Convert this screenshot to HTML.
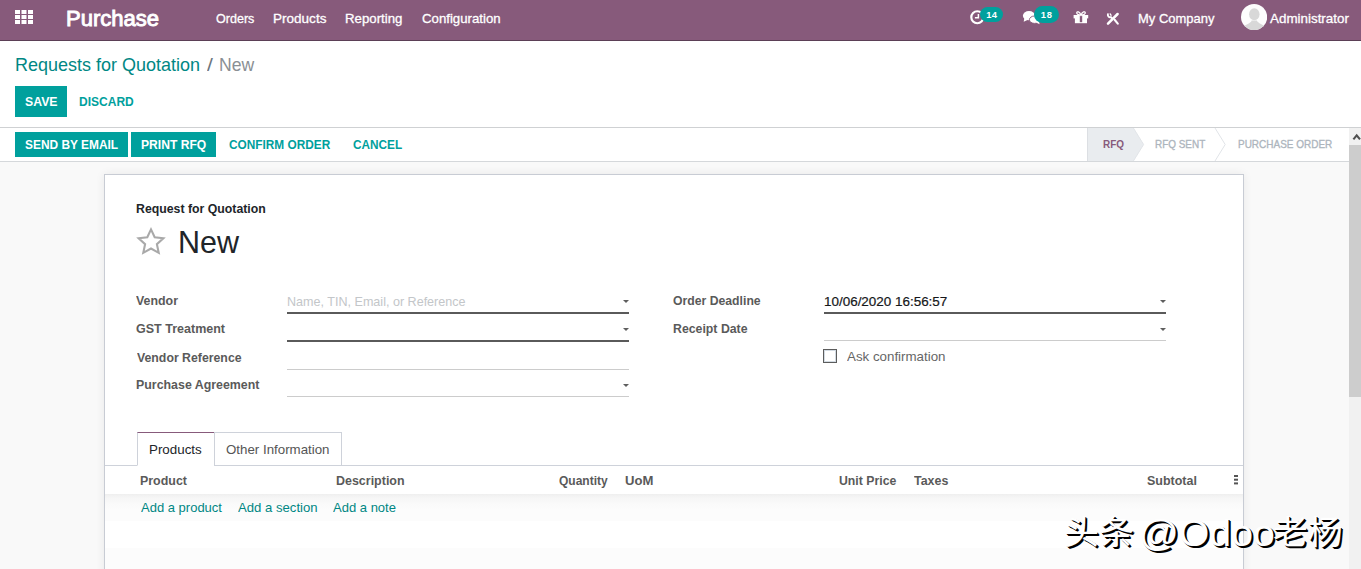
<!DOCTYPE html>
<html><head><meta charset="utf-8"><title>Odoo - New</title>
<style>
*{box-sizing:border-box;margin:0;padding:0}
html,body{width:1361px;height:569px;overflow:hidden;background:#f9f9f9;font-family:"Liberation Sans","Noto Sans CJK SC",sans-serif;font-size:13px;color:#4c4c4c}
.abs{position:absolute;white-space:nowrap}
.tx{position:absolute;white-space:nowrap;line-height:normal;transform-origin:0 0}
#nav{position:absolute;left:0;top:0;width:1361px;height:41px;background:#875a7b;border-bottom:1px solid #5b3f56}
#cp{position:absolute;left:0;top:41px;width:1361px;height:87px;background:#fff;border-bottom:1px solid #cfd1d3}
#sb{position:absolute;left:0;top:128px;width:1349px;height:34px;background:#fff;border-bottom:1px solid #d5d8db}
.btn{position:absolute;background:#00a09d}
#sheet{position:absolute;left:104px;top:174px;width:1140px;height:420px;background:#fff;border:1px solid #c8ccd4;box-shadow:0 0 9px rgba(0,0,0,.07)}
.ln{position:absolute;height:0}
.wm{color:#fff;text-shadow:1px 1px 0 #000,2px 2px 0 #000;line-height:normal}
.caret{position:absolute;width:0;height:0;border-left:3px solid transparent;border-right:3px solid transparent;border-top:3px solid #5e5e5e}
</style></head><body>
<div id="nav">
 <svg class="abs" style="left:15px;top:10px" width="18" height="14" viewBox="0 0 18 14"><g fill="#fff"><rect x="0" y="0" width="5" height="4"/><rect x="6.5" y="0" width="5" height="4"/><rect x="13" y="0" width="5" height="4"/><rect x="0" y="5" width="5" height="4"/><rect x="6.5" y="5" width="5" height="4"/><rect x="13" y="5" width="5" height="4"/><rect x="0" y="10" width="5" height="4"/><rect x="6.5" y="10" width="5" height="4"/><rect x="13" y="10" width="5" height="4"/></g></svg>
 <!-- clock -->
 <svg class="abs" style="left:968px;top:9px" width="18" height="18" viewBox="0 0 18 18"><circle cx="9.3" cy="8.25" r="6.0" fill="none" stroke="#fff" stroke-width="2.2"/><path d="M10.4 4.9 V8.7 H6.9" fill="none" stroke="#fff" stroke-width="1.5"/></svg>
 <div class="abs" style="left:980.3px;top:6.8px;width:22.9px;height:15.5px;border-radius:8px;background:#00a09d"></div>
 <!-- chat -->
 <svg class="abs" style="left:1022px;top:10px" width="19" height="15" viewBox="0 0 19 15"><ellipse cx="7" cy="5.7" rx="6.1" ry="4.6" fill="#fff"/><path d="M2.4 8 L1.7 11.8 L6 9.8 Z" fill="#fff"/><ellipse cx="12.6" cy="9.7" rx="5.2" ry="3.7" fill="#fff" stroke="#875a7b" stroke-width="0.9"/><path d="M14 12.4 L17.6 14.2 L16.8 10.4 Z" fill="#fff"/></svg>
 <div class="abs" style="left:1034px;top:6px;width:25.4px;height:17px;border-radius:9px;background:#00a09d"></div>
 <!-- gift -->
 <svg class="abs" style="left:1072px;top:9px" width="18" height="16" viewBox="0 0 18 16"><g fill="#fff"><rect x="1.6" y="6" width="14.6" height="3.4"/><rect x="2.9" y="9" width="12.1" height="5.2"/></g><rect x="7.8" y="6.4" width="2.4" height="6.8" fill="#875a7b"/><path d="M9 6 C6.4 6 4.4 5.2 4.7 3.7 C5.1 2.2 7.6 2.4 9 6 C10.4 2.4 12.9 2.2 13.3 3.7 C13.6 5.2 11.6 6 9 6 Z" fill="none" stroke="#fff" stroke-width="1.2"/></svg>
 <!-- tools -->
 <svg class="abs" style="left:1105px;top:11px" width="16" height="15" viewBox="0 0 16 15"><path d="M12.6 3 L3 12.6" stroke="#fff" stroke-width="2.5" stroke-linecap="round"/><path d="M9.6 8.8 L12.8 12.6" stroke="#fff" stroke-width="2.1" stroke-linecap="round"/><path d="M2.9 3.3 C2.5 5.3 4 6.5 5.8 6.1 L7.4 7.6" fill="none" stroke="#fff" stroke-width="1.9" stroke-linecap="round"/><path d="M5.2 2.9 L6.1 4.3" stroke="#fff" stroke-width="1.3" stroke-linecap="round"/></svg>
 <!-- avatar -->
 <svg class="abs" style="left:1240.8px;top:3.9px" width="26.2" height="26.2" viewBox="0 0 26 26"><defs><clipPath id="av"><circle cx="13" cy="13" r="13"/></clipPath></defs><g clip-path="url(#av)"><rect width="26" height="26" fill="#fdfdfd"/><ellipse cx="13.2" cy="10.2" rx="5.2" ry="5.9" fill="#d8d8d8"/><path d="M1.5 25 C3 19.6 9.6 20 10.6 16.4 H15.8 C16.8 20 23.4 19.6 24.9 25 V27 H1.5 Z" fill="#d8d8d8"/></g></svg>
</div>
<div id="cp">
 <div class="btn" style="left:15px;top:45px;width:52px;height:31px"></div>
</div>
<div id="sb">
 <div class="btn" style="left:15px;top:4px;width:113px;height:25px"></div>
 <div class="btn" style="left:131px;top:4px;width:85px;height:25px"></div>
 <svg class="abs" style="left:1080px;top:0" width="269" height="33" viewBox="0 0 269 33">
  <path d="M7.5 0 H53.4 L63.6 16.5 L53.4 33 H7.5 Z" fill="#e9ecef"/>
  <path d="M7.5 0 V33" stroke="#dcdfe3" stroke-width="1" fill="none"/>
  <path d="M53.4 0 L63.6 16.5 L53.4 33" stroke="#e1e4e8" stroke-width="1" fill="none"/>
  <path d="M135 0 L145.2 16.5 L135 33" stroke="#e1e4e8" stroke-width="1" fill="none"/>
 </svg>
</div>
<div id="sheet">
 <svg class="abs" style="left:30px;top:50.6px" width="32" height="31" viewBox="0 0 32 31"><path d="M16 3.4 L19.7 11.3 L28.4 12.3 L21.9 18.2 L23.7 26.8 L16 22.5 L8.3 26.8 L10.1 18.2 L3.6 12.3 L12.3 11.3 Z" fill="none" stroke="#a9a9a9" stroke-width="2.1" stroke-linejoin="miter"/></svg>
 <div class="ln" style="left:182px;top:137px;width:342px;border-top:2px solid #5a5a5a"></div>
 <div class="ln" style="left:182px;top:165px;width:342px;border-top:2px solid #5a5a5a"></div>
 <div class="ln" style="left:182px;top:194px;width:342px;border-top:1px solid #ccc"></div>
 <div class="ln" style="left:182px;top:221px;width:342px;border-top:1px solid #ccc"></div>
 <div class="caret" style="left:518px;top:125px"></div>
 <div class="caret" style="left:518px;top:153px"></div>
 <div class="caret" style="left:518px;top:209px"></div>
 <div class="ln" style="left:719px;top:137px;width:342px;border-top:2px solid #5a5a5a"></div>
 <div class="ln" style="left:719px;top:165px;width:342px;border-top:1px solid #ccc"></div>
 <div class="caret" style="left:1055px;top:125px"></div>
 <div class="caret" style="left:1055px;top:153px"></div>
 <div class="abs" style="left:718px;top:174px;width:14px;height:14px;border:1px solid #5c5c5c;background:#fff;box-shadow:inset 0 0 0 1px #d3dbe3"></div>

 <div class="abs" style="left:0;top:290px;width:1138px;height:1px;background:#ced2da"></div>
 <div class="abs" style="left:32px;top:257px;width:78px;height:34px;background:#fff;border:1px solid #ced2da;border-top:1px solid #875a7b;border-bottom:1px solid #fff"></div>
 <div class="abs" style="left:109px;top:257px;width:128px;height:34px;background:#fff;border:1px solid #ced2da"></div>
 <div class="abs" style="left:1129.2px;top:299.8px;width:3.8px;height:2.5px;background:#555;box-shadow:0 3.7px 0 #555,0 7.4px 0 #555"></div>
 <div class="abs" style="left:0;top:319px;width:1138px;height:27px;background:linear-gradient(#efefef,#f6f6f6 4px,#fafafa 10px,#fcfcfc 16px,#fcfcfc)"></div>
 <div class="abs" style="left:0;top:373px;width:1138px;height:27px;background:#fcfcfc"></div>
</div>
<div class="abs" style="left:1349px;top:128px;width:12px;height:441px;background:#f1f1f1"></div>
<div class="abs" style="left:1349px;top:145px;width:12px;height:252px;background:#cdcdcd"></div>
<svg class="abs" style="left:1349px;top:128px" width="12" height="17" viewBox="0 0 12 17"><path d="M4.4 11.4 L7.7 7.3 L11 11.4" fill="none" stroke="#505050" stroke-width="2.1" stroke-linejoin="miter"/></svg>
<div id="txl">
<div class="abs" id="n14" style="left:986.3px;top:9.2px;font-size:9.4px;font-weight:bold;color:#fff;line-height:12px;letter-spacing:0.3px">14</div>
<div class="abs" id="n18" style="left:1040.7px;top:9.2px;font-size:9.4px;font-weight:bold;color:#fff;line-height:12px;letter-spacing:0.8px">18</div>
<div class="tx" id="brand" style="left:65.59px;top:5.81px;font-size:22.4px;font-weight:normal;color:#fff;letter-spacing:0.000px;transform:scaleX(0.9834);-webkit-text-stroke-width:0.95px">Purchase</div>
<div class="tx" id="m1" style="left:215.64px;top:11.10px;font-size:13.6px;font-weight:normal;color:#fff;letter-spacing:0.000px;transform:scaleX(0.9233);-webkit-text-stroke-width:0.3px">Orders</div>
<div class="tx" id="m2" style="left:272.68px;top:11.10px;font-size:13.6px;font-weight:normal;color:#fff;letter-spacing:0.000px;transform:scaleX(0.9956);-webkit-text-stroke-width:0.3px">Products</div>
<div class="tx" id="m3" style="left:344.54px;top:11.10px;font-size:13.6px;font-weight:normal;color:#fff;letter-spacing:0.000px;transform:scaleX(0.9746);-webkit-text-stroke-width:0.3px">Reporting</div>
<div class="tx" id="m4" style="left:421.62px;top:11.10px;font-size:13.6px;font-weight:normal;color:#fff;letter-spacing:0.000px;transform:scaleX(0.9726);-webkit-text-stroke-width:0.3px">Configuration</div>
<div class="tx" id="co" style="left:1137.57px;top:11.10px;font-size:13.6px;font-weight:normal;color:#fff;letter-spacing:0.000px;transform:scaleX(0.9554);-webkit-text-stroke-width:0.3px">My Company</div>
<div class="tx" id="ad" style="left:1269.63px;top:11.10px;font-size:13.6px;font-weight:normal;color:#fff;letter-spacing:0.000px;transform:scaleX(0.9855);-webkit-text-stroke-width:0.3px">Administrator</div>
<div class="tx" id="bc1" style="left:14.63px;top:54.00px;font-size:18.4px;font-weight:normal;color:#008784;letter-spacing:0.000px;transform:scaleX(0.9786);">Requests for Quotation</div>
<div class="tx" id="bc2" style="left:206.58px;top:54.21px;font-size:18.4px;font-weight:normal;color:#6c757d;letter-spacing:0.000px;transform:scaleX(1.1500);">/</div>
<div class="tx" id="bc3" style="left:218.54px;top:54.21px;font-size:18.4px;font-weight:normal;color:#8a8f94;letter-spacing:0.000px;transform:scaleX(0.9564);">New</div>
<div class="tx" id="save" style="left:24.59px;top:94.21px;font-size:13.3px;font-weight:bold;color:#fff;letter-spacing:0.000px;transform:scaleX(0.9249);">SAVE</div>
<div class="tx" id="discard" style="left:79.03px;top:94.21px;font-size:13.3px;font-weight:bold;color:#00a09d;letter-spacing:0.000px;transform:scaleX(0.9036);">DISCARD</div>
<div class="tx" id="b1" style="left:24.72px;top:137.41px;font-size:13.3px;font-weight:bold;color:#fff;letter-spacing:0.000px;transform:scaleX(0.8963);">SEND BY EMAIL</div>
<div class="tx" id="b2" style="left:140.57px;top:137.41px;font-size:13.3px;font-weight:bold;color:#fff;letter-spacing:0.000px;transform:scaleX(0.9110);">PRINT RFQ</div>
<div class="tx" id="b3" style="left:228.59px;top:137.41px;font-size:13.3px;font-weight:bold;color:#00a09d;letter-spacing:0.000px;transform:scaleX(0.8902);">CONFIRM ORDER</div>
<div class="tx" id="b4" style="left:353.14px;top:137.41px;font-size:13.3px;font-weight:bold;color:#00a09d;letter-spacing:0.000px;transform:scaleX(0.8878);">CANCEL</div>
<div class="tx" id="s1" style="left:1102.70px;top:137.20px;font-size:11.6px;font-weight:bold;color:#875a7b;letter-spacing:0.000px;transform:scaleX(0.8579);">RFQ</div>
<div class="tx" id="s2" style="left:1154.71px;top:137.20px;font-size:11.6px;font-weight:normal;color:#adb5bd;letter-spacing:0.000px;transform:scaleX(0.8573);-webkit-text-stroke-width:0.35px">RFQ SENT</div>
<div class="tx" id="s3" style="left:1237.73px;top:137.20px;font-size:11.6px;font-weight:normal;color:#adb5bd;letter-spacing:0.000px;transform:scaleX(0.8608);-webkit-text-stroke-width:0.35px">PURCHASE ORDER</div>
<div class="tx" id="rfq" style="left:135.57px;top:201.01px;font-size:13.4px;font-weight:bold;color:#212529;letter-spacing:0.000px;transform:scaleX(0.9183);">Request for Quotation</div>
<div class="tx" id="new" style="left:177.68px;top:223.81px;font-size:32px;font-weight:normal;color:#212529;letter-spacing:0.000px;transform:scaleX(0.9527);">New</div>
<div class="tx" id="l1" style="left:136.08px;top:293.30px;font-size:13.4px;font-weight:bold;color:#5a5a5a;letter-spacing:0.000px;transform:scaleX(0.9248);">Vendor</div>
<div class="tx" id="l2" style="left:135.96px;top:321.01px;font-size:13.4px;font-weight:bold;color:#5a5a5a;letter-spacing:0.000px;transform:scaleX(0.9348);">GST Treatment</div>
<div class="tx" id="l3" style="left:136.57px;top:349.71px;font-size:13.4px;font-weight:bold;color:#5a5a5a;letter-spacing:0.000px;transform:scaleX(0.9183);">Vendor Reference</div>
<div class="tx" id="l4" style="left:135.54px;top:376.60px;font-size:13.4px;font-weight:bold;color:#5a5a5a;letter-spacing:0.000px;transform:scaleX(0.9250);">Purchase Agreement</div>
<div class="tx" id="ph" style="left:286.58px;top:294.41px;font-size:13.4px;font-weight:normal;color:#c3c6c9;letter-spacing:0.000px;transform:scaleX(0.9384);">Name, TIN, Email, or Reference</div>
<div class="tx" id="r1" style="left:673.13px;top:293.30px;font-size:13.4px;font-weight:bold;color:#5a5a5a;letter-spacing:0.000px;transform:scaleX(0.9131);">Order Deadline</div>
<div class="tx" id="r2" style="left:672.54px;top:321.01px;font-size:13.4px;font-weight:bold;color:#5a5a5a;letter-spacing:0.000px;transform:scaleX(0.9192);">Receipt Date</div>
<div class="tx" id="dt" style="left:823.53px;top:294.41px;font-size:13.4px;font-weight:normal;color:#15171a;letter-spacing:0.000px;transform:scaleX(1.0036);-webkit-text-stroke-width:0.2px">10/06/2020 16:56:57</div>
<div class="tx" id="ask" style="left:846.74px;top:349.01px;font-size:13.4px;font-weight:normal;color:#666;letter-spacing:0.000px;transform:scaleX(0.9952);">Ask confirmation</div>
<div class="tx" id="t1" style="left:148.61px;top:442.21px;font-size:13.4px;font-weight:normal;color:#212529;letter-spacing:0.000px;transform:scaleX(0.9979);">Products</div>
<div class="tx" id="t2" style="left:225.55px;top:442.21px;font-size:13.4px;font-weight:normal;color:#555;letter-spacing:0.000px;transform:scaleX(0.9933);">Other Information</div>
<div class="tx" id="h1" style="left:140.03px;top:473.01px;font-size:13.4px;font-weight:bold;color:#5a5a5a;letter-spacing:0.000px;transform:scaleX(0.9275);">Product</div>
<div class="tx" id="h2" style="left:336.02px;top:473.01px;font-size:13.4px;font-weight:bold;color:#5a5a5a;letter-spacing:0.000px;transform:scaleX(0.9309);">Description</div>
<div class="tx" id="h3" style="left:558.65px;top:473.01px;font-size:13.4px;font-weight:bold;color:#5a5a5a;letter-spacing:0.000px;transform:scaleX(0.8974);">Quantity</div>
<div class="tx" id="h4" style="left:624.61px;top:473.01px;font-size:13.4px;font-weight:bold;color:#5a5a5a;letter-spacing:0.000px;transform:scaleX(0.9781);">UoM</div>
<div class="tx" id="h5" style="left:838.69px;top:473.01px;font-size:13.4px;font-weight:bold;color:#5a5a5a;letter-spacing:0.000px;transform:scaleX(0.9164);">Unit Price</div>
<div class="tx" id="h6" style="left:913.59px;top:473.01px;font-size:13.4px;font-weight:bold;color:#5a5a5a;letter-spacing:0.000px;transform:scaleX(0.9283);">Taxes</div>
<div class="tx" id="h7" style="left:1146.53px;top:473.01px;font-size:13.4px;font-weight:bold;color:#5a5a5a;letter-spacing:0.000px;transform:scaleX(0.9321);">Subtotal</div>
<div class="tx" id="a1" style="left:140.66px;top:499.91px;font-size:13.4px;font-weight:normal;color:#008784;letter-spacing:0.000px;transform:scaleX(0.9711);">Add a product</div>
<div class="tx" id="a2" style="left:237.66px;top:499.91px;font-size:13.4px;font-weight:normal;color:#008784;letter-spacing:0.000px;transform:scaleX(0.9804);">Add a section</div>
<div class="tx" id="a3" style="left:333.09px;top:499.91px;font-size:13.4px;font-weight:normal;color:#008784;letter-spacing:0.000px;transform:scaleX(0.9721);">Add a note</div>
</div>
<div class="abs wm" id="wm1" style="left:1064px;top:503px;transform:scaleY(0.95);transform-origin:0 88%;font-size:35px;font-family:'Liberation Sans','Noto Sans CJK SC',sans-serif;font-weight:400">头条</div>
<div class="abs wm" id="wm2" style="left:1139.3px;top:512.7px;font-size:36px;transform-origin:0 0;transform:scaleX(1.09)">@Odoo</div>
<div class="abs wm" id="wm3" style="left:1272.7px;top:503px;transform:scaleY(0.95);transform-origin:0 88%;font-size:35px;font-family:'Liberation Sans','Noto Sans CJK SC',sans-serif;font-weight:400">老杨</div>
</body></html>
